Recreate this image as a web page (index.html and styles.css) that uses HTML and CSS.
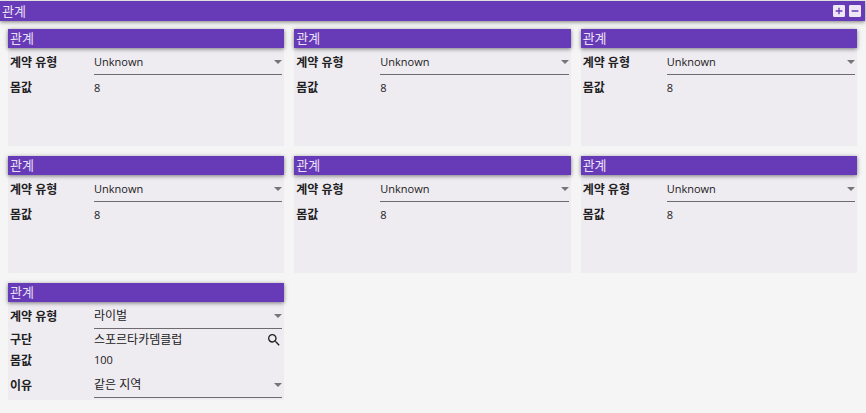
FILE: index.html
```html
<!DOCTYPE html>
<html lang="ko">
<head>
<meta charset="utf-8">
<title>관계</title>
<link rel="stylesheet" href="styles.css">
</head>
<body>
<svg class="defs" aria-hidden="true">
  <symbol id="arrow" viewBox="0 0 8 4"><path d="M0 0h8L4 4z"/></symbol>
  <symbol id="add" viewBox="0 0 24 24"><path d="M19 3H5a2 2 0 0 0-2 2v14a2 2 0 0 0 2 2h14a2 2 0 0 0 2-2V5a2 2 0 0 0-2-2zm-2 10h-4v4h-2v-4H7v-2h4V7h2v4h4v2z"/></symbol>
  <symbol id="remove" viewBox="0 0 24 24"><path d="M19 3H5a2 2 0 0 0-2 2v14a2 2 0 0 0 2 2h14a2 2 0 0 0 2-2V5a2 2 0 0 0-2-2zm-2 10H7v-2h10v2z"/></symbol>
  <symbol id="search" viewBox="0 0 24 24"><path d="M15.500 14h-.79l-.28-.27A6.471 6.471 0 0 0 16 9.500 6.500 6.500 0 1 0 9.500 16c1.610 0 3.090-.59 4.230-1.570l.27.28v.79l5 4.990L20.490 19l-4.990-5zm-6 0C7.010 14 5 11.990 5 9.500S7.010 5 9.500 5 14 7.010 14 9.500 11.990 14 9.500 14z"/></symbol>
</svg>
<header class="bar">
  <h1 class="title">관계</h1>
  <button class="icon-button" type="button" aria-label="추가"><svg class="icon"><use href="#add"/></svg></button>
  <button class="icon-button" type="button" aria-label="삭제"><svg class="icon"><use href="#remove"/></svg></button>
</header>
<main class="cards">
  <section class="card">
    <h2 class="card-title">관계</h2>
    <div class="row row-select">
      <label for="type1">계약 유형</label>
      <div class="field"><select id="type1" class="latin"><option>Unknown</option></select><svg class="arrow"><use href="#arrow"/></svg></div>
    </div>
    <div class="row row-value">
      <label for="value1">몸값</label>
      <input id="value1" class="latin" value="8">
    </div>
  </section>
  <section class="card">
    <h2 class="card-title">관계</h2>
    <div class="row row-select">
      <label for="type2">계약 유형</label>
      <div class="field"><select id="type2" class="latin"><option>Unknown</option></select><svg class="arrow"><use href="#arrow"/></svg></div>
    </div>
    <div class="row row-value">
      <label for="value2">몸값</label>
      <input id="value2" class="latin" value="8">
    </div>
  </section>
  <section class="card">
    <h2 class="card-title">관계</h2>
    <div class="row row-select">
      <label for="type3">계약 유형</label>
      <div class="field"><select id="type3" class="latin"><option>Unknown</option></select><svg class="arrow"><use href="#arrow"/></svg></div>
    </div>
    <div class="row row-value">
      <label for="value3">몸값</label>
      <input id="value3" class="latin" value="8">
    </div>
  </section>
  <section class="card">
    <h2 class="card-title">관계</h2>
    <div class="row row-select">
      <label for="type4">계약 유형</label>
      <div class="field"><select id="type4" class="latin"><option>Unknown</option></select><svg class="arrow"><use href="#arrow"/></svg></div>
    </div>
    <div class="row row-value">
      <label for="value4">몸값</label>
      <input id="value4" class="latin" value="8">
    </div>
  </section>
  <section class="card">
    <h2 class="card-title">관계</h2>
    <div class="row row-select">
      <label for="type5">계약 유형</label>
      <div class="field"><select id="type5" class="latin"><option>Unknown</option></select><svg class="arrow"><use href="#arrow"/></svg></div>
    </div>
    <div class="row row-value">
      <label for="value5">몸값</label>
      <input id="value5" class="latin" value="8">
    </div>
  </section>
  <section class="card">
    <h2 class="card-title">관계</h2>
    <div class="row row-select">
      <label for="type6">계약 유형</label>
      <div class="field"><select id="type6" class="latin"><option>Unknown</option></select><svg class="arrow"><use href="#arrow"/></svg></div>
    </div>
    <div class="row row-value">
      <label for="value6">몸값</label>
      <input id="value6" class="latin" value="8">
    </div>
  </section>
  <section class="card">
    <h2 class="card-title">관계</h2>
    <div class="row row-select">
      <label for="type7">계약 유형</label>
      <div class="field"><select id="type7"><option>라이벌</option></select><svg class="arrow"><use href="#arrow"/></svg></div>
    </div>
    <div class="row row-compact">
      <label for="club7">구단</label>
      <div class="lookup">
        <input id="club7" value="스포르타카뎀클럽">
        <button class="icon-button search" type="button" aria-label="구단 검색"><svg class="icon"><use href="#search"/></svg></button>
      </div>
    </div>
    <div class="row row-compact">
      <label for="value7">몸값</label>
      <input id="value7" class="latin" value="100">
    </div>
    <div class="row row-select">
      <label for="reason7">이유</label>
      <div class="field"><select id="reason7"><option>같은 지역</option></select><svg class="arrow"><use href="#arrow"/></svg></div>
    </div>
  </section>
</main>
</body>
</html>
```

FILE: styles.css
```css
* {
  box-sizing: border-box;
}

body {
  margin: 0;
  background: #f5f5f5;
  color: #212121;
  font: 12px/18px "Open Sans", "Noto Sans CJK KR", sans-serif;
}

.defs {
  display: none;
}

.bar {
  display: flex;
  align-items: center;
  height: 21px;
  margin-right: 1px;
  padding: 0 2px;
  border-top: 1px solid #e0e0e0;
  background: #673ab7;
  color: #e8e0f4;
  box-shadow: 0 1px 4px rgba(0, 0, 0, 0.5);
}

.title,
.card-title {
  margin: 0;
  font-size: 13px;
  font-weight: 400;
  line-height: 19px;
}

.title {
  flex: 1;
  line-height: 18px;
}

.icon-button {
  display: flex;
  flex: none;
  padding: 0;
  border: 0;
  background: none;
  color: #ede7f6;
  cursor: pointer;
}

.icon {
  width: 16px;
  height: 16px;
  fill: currentColor;
}

.cards {
  display: grid;
  grid-template-columns: repeat(3, minmax(0, 1fr));
  gap: 10px;
  padding: 8px 9px 8px 8px;
}

.card {
  min-height: 117px;
  background: #eeebf1;
}

.card-title {
  padding: 0 2px;
  background: #673ab7;
  color: #e8e0f4;
  box-shadow: 0 1px 4px rgba(0, 0, 0, 0.5);
}

.row {
  display: grid;
  grid-template-columns: 84px minmax(0, 1fr);
  align-items: center;
  padding: 0 2px;
}

.row-select {
  height: 27px;
  padding-top: 2px;
}

.row-value {
  height: 26px;
}

.row-compact {
  height: 21px;
}

label {
  font-weight: 700;
}

.field {
  display: grid;
  align-items: center;
  height: 100%;
  border-bottom: 1px solid #6d6b70;
}

.field > * {
  grid-area: 1 / 1;
}

select,
input {
  width: 100%;
  min-width: 0;
  height: 20px;
  margin: 0;
  padding: 0;
  border: 0;
  outline: 0;
  background: none;
  color: inherit;
  font: inherit;
  appearance: none;
}

input {
  padding-bottom: 2px;
}

.latin {
  font-size: 11px;
}

.arrow {
  justify-self: end;
  width: 8px;
  height: 4px;
  fill: #757575;
  pointer-events: none;
}

.lookup {
  display: flex;
  align-items: center;
}

.search {
  color: #212121;
}
```
